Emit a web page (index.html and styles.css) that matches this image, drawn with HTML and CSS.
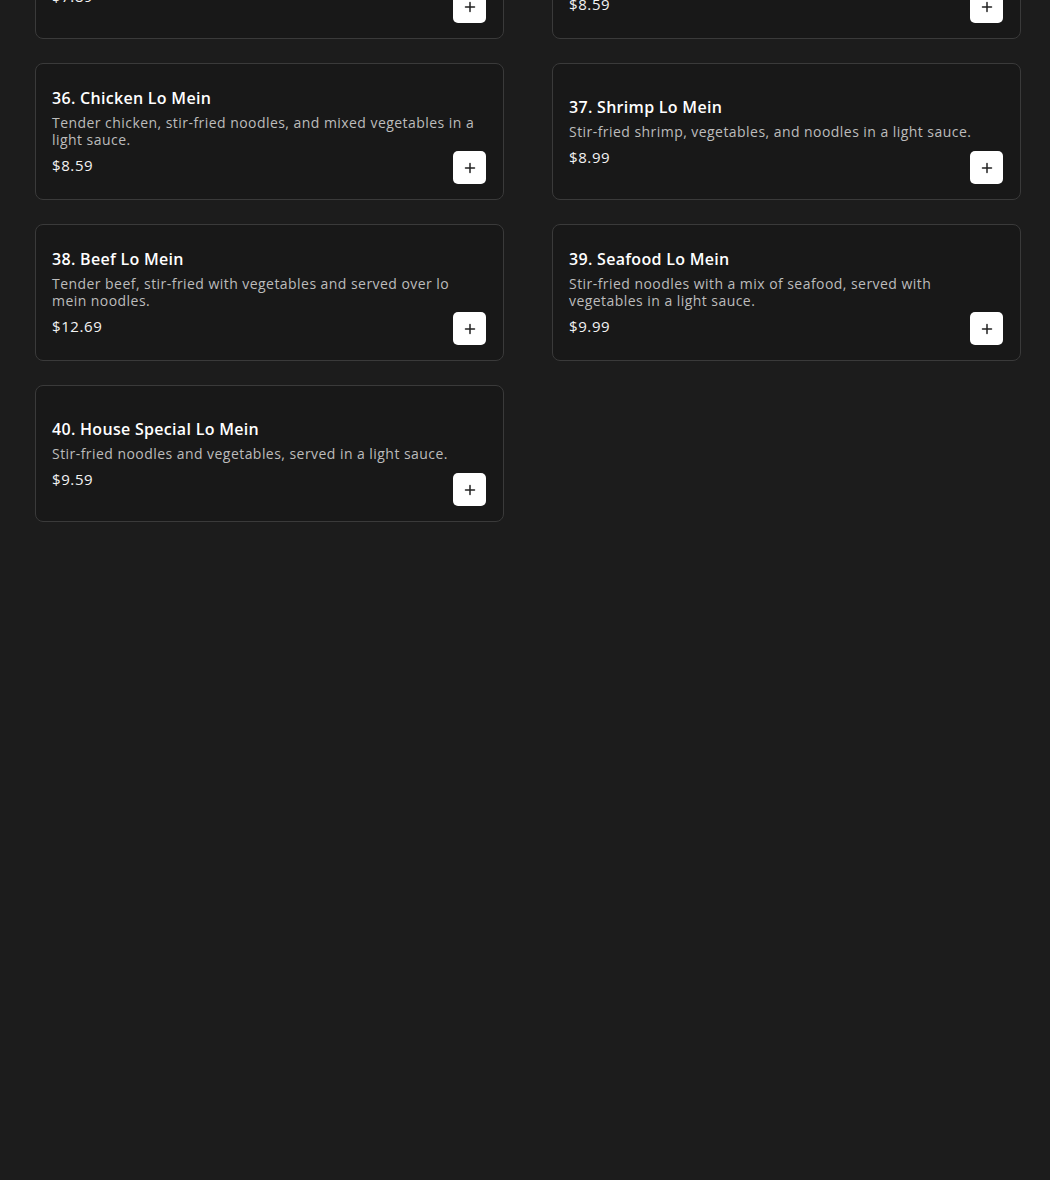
FILE: index.html
```html
<!DOCTYPE html>
<html lang="en">
<head>
<meta charset="utf-8">
<title>Lo Mein</title>
<link rel="stylesheet" href="styles.css">
</head>
<body>
<main class="menu-grid">
  <article class="card">
    <div class="card-body">
      <h3 class="card-title">34. Vegetable Lo Mein</h3>
      <p class="card-desc">Fresh mixed vegetables and noodles in a light sauce.</p>
      <p class="card-price">$7.89</p>
    </div>
    <button class="add-btn" aria-label="Add"><svg viewBox="0 0 12 12" width="12" height="12"><path d="M6 1.5v9M1.5 6h9" stroke="#222" stroke-width="1.5" stroke-linecap="round"/></svg></button>
  </article>
  <article class="card">
    <div class="card-body">
      <h3 class="card-title">35. Pork Lo Mein</h3>
      <p class="card-desc">Roast pork, stir-fried noodles, and mixed vegetables in a light sauce.</p>
      <p class="card-price">$8.59</p>
    </div>
    <button class="add-btn" aria-label="Add"><svg viewBox="0 0 12 12" width="12" height="12"><path d="M6 1.5v9M1.5 6h9" stroke="#222" stroke-width="1.5" stroke-linecap="round"/></svg></button>
  </article>
  <article class="card">
    <div class="card-body">
      <h3 class="card-title">36. Chicken Lo Mein</h3>
      <p class="card-desc">Tender chicken, stir-fried noodles, and mixed vegetables in a light sauce.</p>
      <p class="card-price">$8.59</p>
    </div>
    <button class="add-btn" aria-label="Add"><svg viewBox="0 0 12 12" width="12" height="12"><path d="M6 1.5v9M1.5 6h9" stroke="#222" stroke-width="1.5" stroke-linecap="round"/></svg></button>
  </article>
  <article class="card">
    <div class="card-body">
      <h3 class="card-title">37. Shrimp Lo Mein</h3>
      <p class="card-desc">Stir-fried shrimp, vegetables, and noodles in a light sauce.</p>
      <p class="card-price">$8.99</p>
    </div>
    <button class="add-btn" aria-label="Add"><svg viewBox="0 0 12 12" width="12" height="12"><path d="M6 1.5v9M1.5 6h9" stroke="#222" stroke-width="1.5" stroke-linecap="round"/></svg></button>
  </article>
  <article class="card">
    <div class="card-body">
      <h3 class="card-title">38. Beef Lo Mein</h3>
      <p class="card-desc">Tender beef, stir-fried with vegetables and served over lo mein noodles.</p>
      <p class="card-price">$12.69</p>
    </div>
    <button class="add-btn" aria-label="Add"><svg viewBox="0 0 12 12" width="12" height="12"><path d="M6 1.5v9M1.5 6h9" stroke="#222" stroke-width="1.5" stroke-linecap="round"/></svg></button>
  </article>
  <article class="card">
    <div class="card-body">
      <h3 class="card-title">39. Seafood Lo Mein</h3>
      <p class="card-desc">Stir-fried noodles with a mix of seafood, served with vegetables in a light sauce.</p>
      <p class="card-price">$9.99</p>
    </div>
    <button class="add-btn" aria-label="Add"><svg viewBox="0 0 12 12" width="12" height="12"><path d="M6 1.5v9M1.5 6h9" stroke="#222" stroke-width="1.5" stroke-linecap="round"/></svg></button>
  </article>
  <article class="card">
    <div class="card-body">
      <h3 class="card-title">40. House Special Lo Mein</h3>
      <p class="card-desc">Stir-fried noodles and vegetables, served in a light sauce.</p>
      <p class="card-price">$9.59</p>
    </div>
    <button class="add-btn" aria-label="Add"><svg viewBox="0 0 12 12" width="12" height="12"><path d="M6 1.5v9M1.5 6h9" stroke="#222" stroke-width="1.5" stroke-linecap="round"/></svg></button>
  </article>
</main>
</body>
</html>
```

FILE: styles.css
```css
html, body {
  margin: 0;
  padding: 0;
  background: #1c1c1c;
  height: 100%;
  overflow: hidden;
}

body {
  font-family: "Open Sans", "Noto Sans", sans-serif;
  color: #fff;
}

.menu-grid {
  display: grid;
  grid-template-columns: 469px 469px;
  column-gap: 48px;
  row-gap: 24px;
  margin: -98px 0 0 35px;
}

.card {
  position: relative;
  box-sizing: border-box;
  height: 137px;
  background: #181818;
  border: 1px solid #3a3a3a;
  border-radius: 8px;
  display: flex;
  align-items: center;
  padding: 0 16px;
}

.card-body {
  width: 426px;
}

.card-title {
  margin: 0 0 6px;
  font-size: 16px;
  line-height: 20px;
  font-weight: 600;
  letter-spacing: 0.3px;
  color: #fff;
}

.card-desc {
  margin: 0;
  font-size: 14px;
  line-height: 17px;
  letter-spacing: 0.45px;
  color: #bcbcbc;
}

.card-price {
  margin: 7px 0 0;
  font-size: 15px;
  line-height: 20px;
  letter-spacing: 0.6px;
  color: #f2f2f2;
}

.add-btn {
  position: absolute;
  right: 17px;
  bottom: 15px;
  width: 33px;
  height: 33px;
  padding: 0;
  border: none;
  border-radius: 5px;
  background: #fff;
  display: flex;
  align-items: center;
  justify-content: center;
  cursor: pointer;
}

.add-btn svg {
  display: block;
}
```
